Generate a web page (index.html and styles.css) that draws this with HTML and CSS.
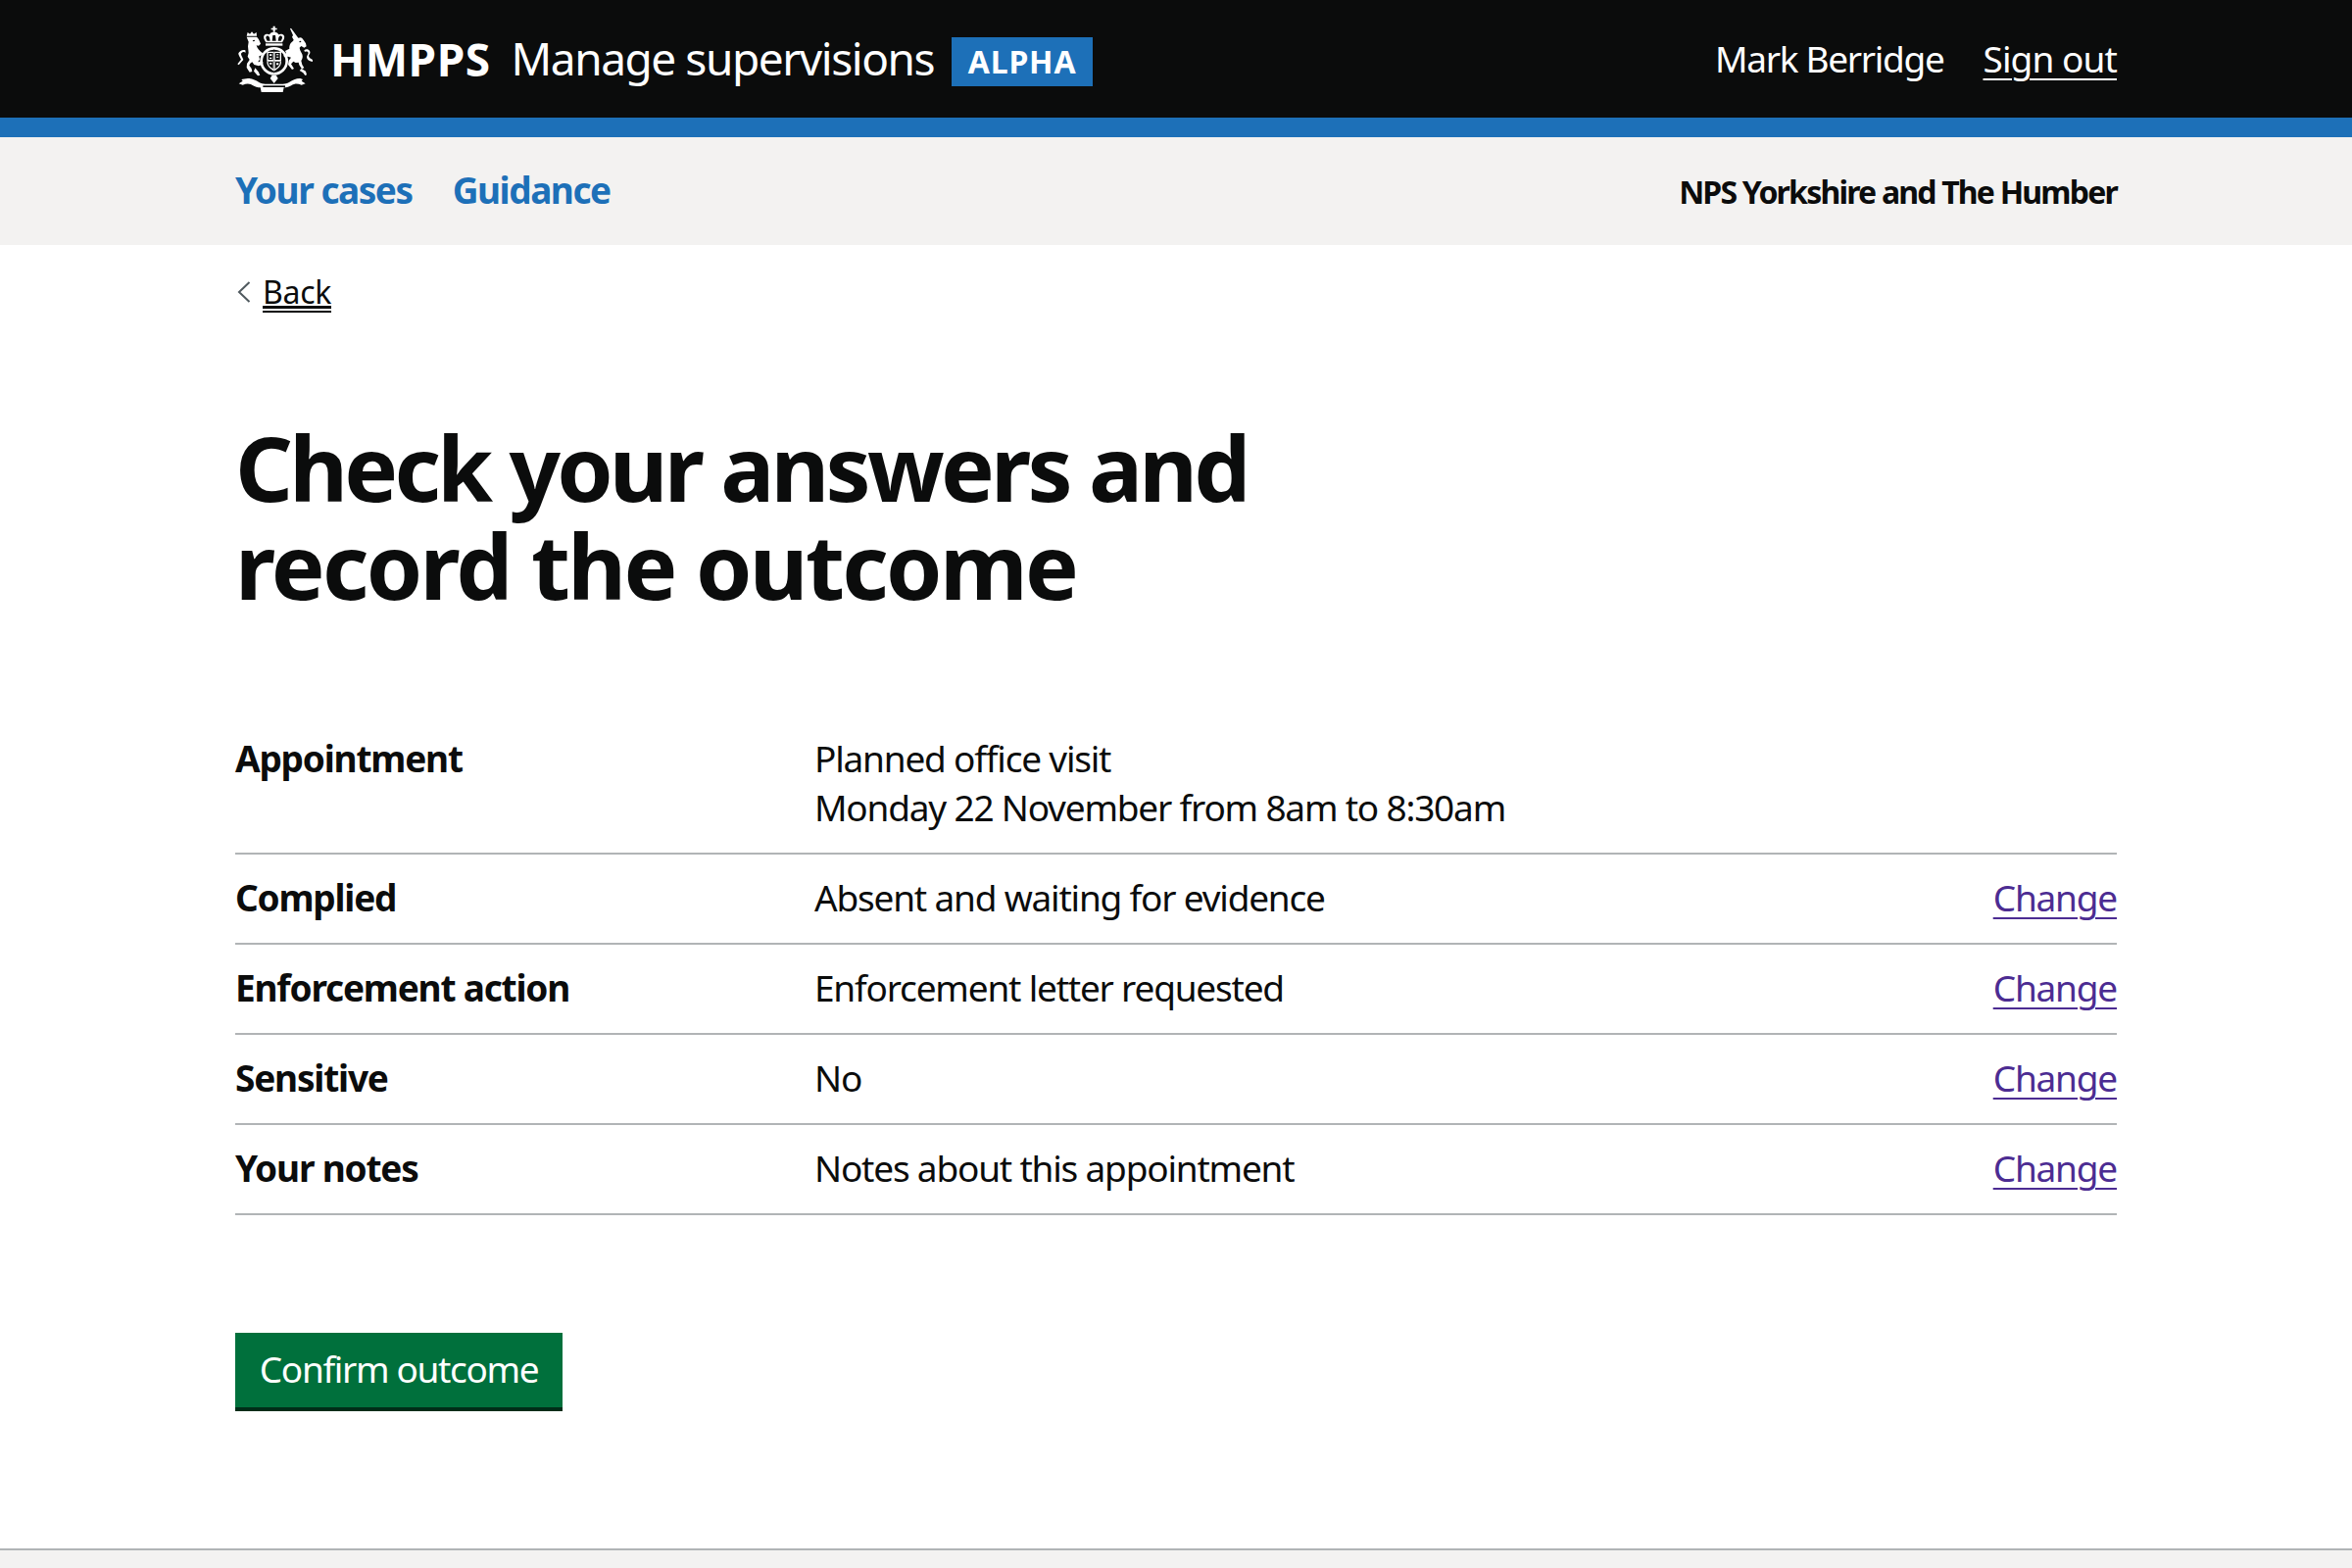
FILE: index.html
```html
<!DOCTYPE html>
<html lang="en">
<head>
<meta charset="utf-8">
<title>Check your answers and record the outcome</title>
<link rel="stylesheet" href="styles.css">
</head>
<body>
<header class="masthead">
  <div class="wrap masthead-row">
    <div class="brand">
      <svg class="crest" viewBox="12 10 234 204" aria-hidden="true">
        <g fill="#fff">
          <!-- crown -->
          <path d="M125 12h6v6h6v5h-6v7h-6v-7h-6v-5h6z"/>
          <path fill-rule="evenodd" d="M128 30c8 0 13 4 14 8 4-3 12-3 16 2 4 6 0 14-5 22H103c-5-8-9-16-5-22 4-5 12-5 16-2 1-4 6-8 14-8zM106 42c-3 1-4 4-2 9l3 6h9l-2-10c-2-4-5-6-8-5zm44 0c-3-1-6 1-8 5l-2 10h9l3-6c2-5 1-8-2-9zM124 40l-2 17h12l-2-17z"/>
          <path d="M102 65h52v7h-52z"/>
          <!-- garter and shield -->
          <path fill-rule="evenodd" d="M128 76a43 43 0 1 1 0 86 43 43 0 0 1 0-86zm0 8a35 35 0 1 0 0 70 35 35 0 0 0 0-70z"/>
          <path fill-rule="evenodd" d="M106 90h44v32c0 13-11 21-22 28-11-7-22-15-22-28zm4 4v21h15V94zm21 0v21h15V94zm-21 27v3c0 8 7 14 15 19v-22zm21 0v22c8-5 15-11 15-19v-3z"/>
          <path d="M114 98h7v5h-7zM135 98h7v3h-7zM135 105h7v3h-7zM114 108h7v4h-7zM114 124h7v5h-7zM135 125h7v6h-7z"/>
          <!-- lion -->
          <path d="M44 42l3-11 7 5 6-7 6 7 8-5 1 11z"/>
          <path d="M44 45h31c5 5 8 10 10 16l2 5-6 6-7-1c2 8 8 16 19 24l-1 6-10 3 2 10-5 7c3 2 5 0 9-2l6 3-1 7-12 5-14-4-6-8c-5 3-8 6-9 10l7 10 2 9-8 2-9-14 1-12 8-12-6-10 3-11-2-20 2-14z"/>
          <path d="M40 86c-8-3-17 1-21 9-1 4 4 12 8 19l-11 14 4 3 14-16c-2-8-8-14-7-19 3-5 9-6 14-3z"/>
          <path d="M70 140l10 12 5 10-7 2-12-14z"/>
          <!-- unicorn -->
          <path d="M177 20l3-2 22 30 8-1c7 4 9 10 15 18l2 9-7 4-9-5-5 5c1 9 5 13 8 20 3 8 1 14-3 20l3 12 6 10-7 3-8-12-2-8-9 1-7-4-7 8 9 14-6 3-12-15 2-13 7-9-9-3-12 2-2-7 8-5-3-7 7-4 6-3c-1-6 1-12 4-17 3-4 7-6 9-10l-5-9 3-5z"/>
          <path d="M220 86c6-5 14-3 17 2 3 6 0 10-3 14 0 6 5 9 9 11l5 4-3 4c-7-1-12-4-15-8-3-5-2-10 1-14 2-3 3-6 0-8-3-2-6-1-9 0z"/>
          <path d="M212 142l13 8 3 11-5 2-6-8-11-7z"/>
          <!-- motto ribbon -->
          <path d="M48 172c14 0 24 6 34 12 6 4 12 5 19 5h54c7 0 13-1 19-5 10-6 20-12 34-12l8 3-4 5 12 8-12 4c-12-5-21-5-30 1-8 5-15 7-24 7l-3 14H89l-3-14c-9 0-16-2-24-7-9-6-18-6-30-1l-12-4 12-8-4-5z"/>
          <path d="M122 162h12l6 10-12 15-12-15z"/>
        </g>
        <g fill="#0b0c0c">
          <path d="M94 194h68v5H94z"/>
          <path d="M62 56l6-2 1 4-5 1z"/>
          <path d="M205 58l5-1 1 4-5 1z"/>
          <path d="M128 82v76M106 120h44" stroke="#0b0c0c" stroke-width="1"/>
        </g>
      </svg>
      <span class="org">HMPPS</span>
      <span class="service">Manage supervisions</span>
      <span class="tag">ALPHA</span>
    </div>
    <div class="account">
      <span class="account-name">Mark Berridge</span>
      <a class="link-light" href="#">Sign out</a>
    </div>
  </div>
</header>

<nav class="subnav">
  <div class="wrap subnav-row">
    <div class="subnav-links">
      <a href="#">Your cases</a>
      <a href="#">Guidance</a>
    </div>
    <span class="region">NPS Yorkshire and The Humber</span>
  </div>
</nav>

<main class="wrap main">
  <a class="back" href="#">
    <svg class="back-icon" viewBox="0 0 14 22" aria-hidden="true"><path d="M12.5 1 2 11l10.5 10" fill="none" stroke="#505a5f" stroke-width="2"/></svg>
    <span>Back</span>
  </a>
  <h1 class="title"><span class="title-first">Check your answers and</span><br><span class="title-second">record the outcome</span></h1>

  <dl class="summary">
    <div class="row">
      <dt>Appointment</dt>
      <dd>Planned office visit<br>Monday 22 November from 8am to 8:30am</dd>
      <dd class="action"></dd>
    </div>
    <div class="row">
      <dt>Complied</dt>
      <dd>Absent and waiting for evidence</dd>
      <dd class="action"><a href="#">Change</a></dd>
    </div>
    <div class="row">
      <dt>Enforcement action</dt>
      <dd>Enforcement letter requested</dd>
      <dd class="action"><a href="#">Change</a></dd>
    </div>
    <div class="row">
      <dt>Sensitive</dt>
      <dd>No</dd>
      <dd class="action"><a href="#">Change</a></dd>
    </div>
    <div class="row">
      <dt>Your notes</dt>
      <dd>Notes about this appointment</dd>
      <dd class="action"><a href="#">Change</a></dd>
    </div>
  </dl>

  <button class="button" type="button">Confirm outcome</button>
</main>

<footer class="footer"></footer>
</body>
</html>
```

FILE: styles.css
```css
* { box-sizing: border-box; }
html, body { margin: 0; padding: 0; }
body {
  min-height: 1600px;
  display: flex;
  flex-direction: column;
  background: #fff;
  color: #0b0c0c;
  font-family: "Noto Sans", "Liberation Sans", sans-serif;
  font-size: 37px;
  line-height: 50px;
}
.wrap { width: 1920px; margin: 0 auto; }

.masthead { background: #0b0c0c; border-bottom: 20px solid #1d70b8; color: #fff; height: 140px; }
.masthead-row { height: 120px; display: flex; justify-content: space-between; align-items: center; }
.brand { display: flex; align-items: center; }
.crest { width: 78px; height: 68px; margin: 0 18px 0 1px; flex: none; }
.org { font-weight: 700; font-size: 46px; letter-spacing: 0.5px; margin-right: 21px; }
.service { font-size: 46px; letter-spacing: -1.45px; margin: -2px 18px 0 0; }
.tag { background: #1d70b8; color: #fff; font-weight: 700; font-size: 32px; letter-spacing: 0.8px; line-height: 50px; height: 50px; width: 144px; text-align: center; margin-top: 6px; }
.account { display: flex; gap: 40px; }
.account-name { letter-spacing: -1.3px; }
.link-light { color: #fff; letter-spacing: -0.9px; text-decoration: underline; text-decoration-thickness: 2px; text-underline-offset: 6px; }

.subnav { background: #f3f2f1; height: 110px; }
.subnav-row { height: 110px; display: flex; justify-content: space-between; align-items: center; }
.subnav-links { display: flex; gap: 41px; margin-top: -3px; }
.subnav-links a { color: #1d70b8; font-weight: 700; text-decoration: none; letter-spacing: -1.45px; }
.region { font-weight: 700; font-size: 32px; letter-spacing: -1.8px; margin-top: 2px; }

.main { flex: 1; padding-top: 28px; }
.back { display: flex; align-items: center; gap: 12px; width: max-content; padding-left: 2px; color: #0b0c0c; font-size: 32px; line-height: 40px; letter-spacing: -0.3px; }
.back-icon { width: 14px; height: 22px; flex: none; }
.back span { text-decoration: underline; text-decoration-thickness: 2px; text-underline-offset: 7px; }
.title { margin: 109px 0 103px; font-size: 92px; line-height: 100px; font-weight: 700; }
.title-first { letter-spacing: -3.8px; }
.title-second { letter-spacing: -2.65px; }

.summary { margin: 0 0 120px; }
.row { display: grid; grid-template-columns: 591px 1fr auto; border-bottom: 2px solid #b1b4b6; padding: 19px 0 21px; }
.row dt { font-weight: 700; letter-spacing: -1.2px; }
.row dd { margin: 0; letter-spacing: -1.2px; }
.row .action { letter-spacing: -1.2px; }
.row .action a { color: #4c2c92; text-decoration: underline; text-decoration-thickness: 2px; text-underline-offset: 6px; }

.button {
  display: block;
  height: 80px;
  width: 334px;
  padding: 0 0 6px;
  border: 0;
  background: #00703c;
  box-shadow: inset 0 -4px 0 #002d18;
  color: #fff;
  font: 400 37px/50px "Noto Sans", "Liberation Sans", sans-serif;
  letter-spacing: -1.35px;
  text-align: center;
}

.footer { height: 20px; background: #f3f2f1; border-top: 2px solid #b1b4b6; }
```
